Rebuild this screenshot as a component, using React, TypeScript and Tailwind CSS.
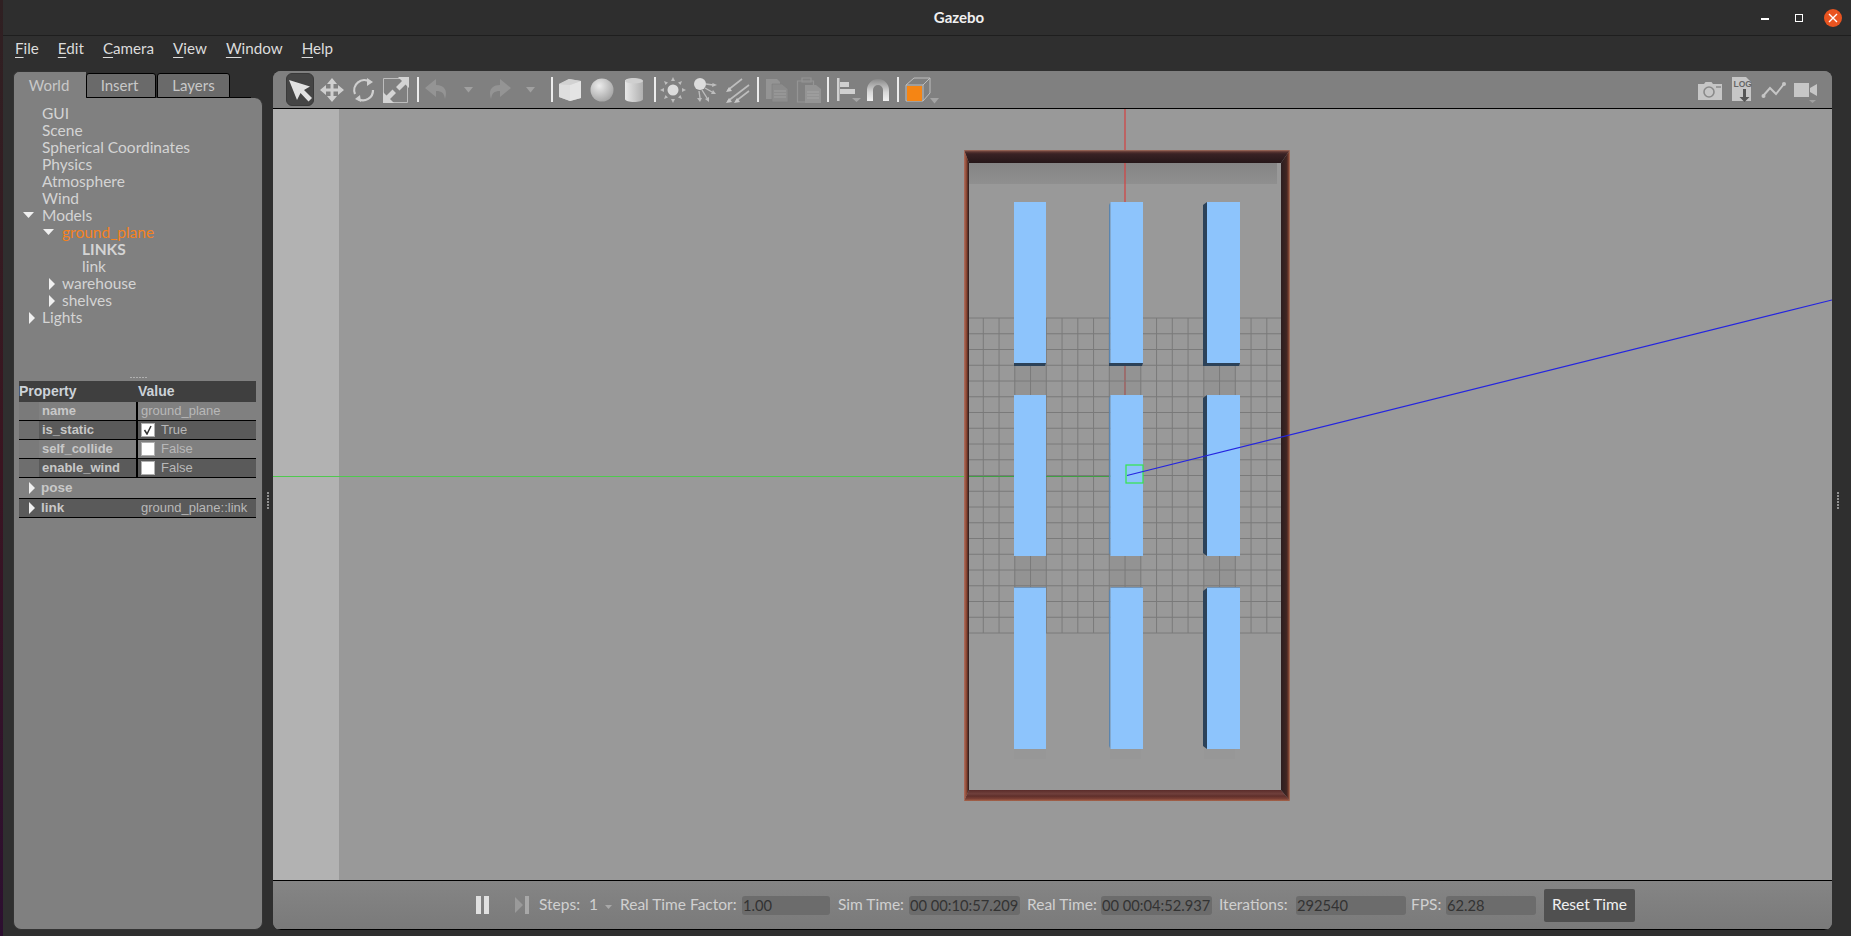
import React from "react";

const ui = "font-['Lato','Noto_Sans',sans-serif]";
const arial = "font-['Liberation_Sans',Arial,sans-serif]";

function Ico({ children, w = 32 }: { children: React.ReactNode; w?: number }) {
  return (
    <div className="flex h-[33px] shrink-0 items-center justify-center" style={{ width: w }}>
      <svg width="28" height="28" viewBox="0 0 28 28">{children}</svg>
    </div>
  );
}
function Sep({ l = 4, r = 2 }: { l?: number; r?: number }) {
  return <div className="h-[25px] w-[2px] shrink-0 bg-[#ececec]" style={{ marginLeft: l, marginRight: r }} />;
}
function Drop({ w = 30 }: { w?: number }) {
  return (
    <div className="flex h-[33px] shrink-0 items-center justify-center" style={{ width: w }}>
      <svg width="9" height="6" viewBox="0 0 9 6"><path d="M0 0h9L4.500 5.500z" fill="#a0a0a0" /></svg>
    </div>
  );
}

function Toolbar() {
  const on = "#cfcfcf";
  const off = "#949494";
  return (
    <div className="flex h-[38px] shrink-0 items-center border-b border-black bg-[#808080] pl-[11px] pr-[10px]">
      <div className="mx-[2px] flex h-[33px] w-[28px] shrink-0 items-center justify-center rounded-[6px] border border-[#3a3a3a] bg-[#454545]">
        <svg width="26" height="26" viewBox="0 0 26 26"><path d="M2 3 L23 9.500 L17 13 L25 21 L21.500 24.500 L13.500 16 L10 23 Z" fill="#e2e2e2" /></svg>
      </div>
      <Ico><path d="M14 2l5 6h-3.500v4.500H20V9l6 5-6 5v-3.500h-4.500V20H19l-5 6-5-6h3.500v-4.500H8V19l-6-5 6-5v3.500h4.500V8H9z" fill={on} /></Ico>
      <Ico>
        <path d="M5 18A10 10 0 0 1 20 6" fill="none" stroke={on} strokeWidth="2.200" />
        <path d="M23 14A10 10 0 0 1 8 23" fill="none" stroke={on} strokeWidth="2.200" />
        <path d="M17 2l6 4-6 4zM11 26l-6-3 5-4z" fill={on} />
      </Ico>
      <Ico>
        <path d="M1.500 2.500h24v24h-24z" fill="none" stroke="#bdbdbd" strokeWidth="1" />
        <path d="M16 1h11v11l-3.500-3.500-6 6-3.500-3.500 6-6zM12 27H1V16l3.500 3.500 6-6 3.500 3.500-6 6z" fill="#d4d4d4" />
      </Ico>
      <Sep l={5} r={2} />
      <Ico><path d="M13 3L2 12l11 9v-6c6 0 8 2 9 8 3-9-1-14-9-14z" fill={off} /></Ico>
      <Drop />
      <Ico><path d="M15 3l11 9-11 9v-6c-6 0-8 2-9 8-3-9 1-14 9-14z" fill={off} /></Ico>
      <Drop />
      <Sep l={6} r={1} />
      <Ico>
        <path d="M3 8l10-5 12 2v17l-11 3-11-4z" fill="#c8c8c8" />
        <path d="M3 8l10-5 12 2-11 4z" fill="#d2d2d2" />
        <path d="M3 8l11 1v16l-11-4z" fill="#dedede" />
        <path d="M14 9l11-4v17l-11 3z" fill="#e4e4e4" />
      </Ico>
      <Ico>
        <defs>
          <radialGradient id="sph" cx="0.38" cy="0.32" r="0.8"><stop offset="0" stopColor="#ececec" /><stop offset="1" stopColor="#9c9c9c" /></radialGradient>
          <linearGradient id="cyl" x1="0" x2="1"><stop offset="0" stopColor="#e8e8e8" /><stop offset="1" stopColor="#b0b0b0" /></linearGradient>
          <linearGradient id="mag" x1="0" y1="0" x2="0" y2="1"><stop offset="0" stopColor="#8a8a8a" /><stop offset="0.6" stopColor="#d8d8d8" /><stop offset="1" stopColor="#f2f2f2" /></linearGradient>
        </defs>
        <circle cx="14" cy="14" r="11.500" fill="url(#sph)" />
      </Ico>
      <Ico>
        <path d="M5 5c0-4 18-4 18 0v18c0 4-18 4-18 0z" fill="url(#cyl)" />
        <ellipse cx="14" cy="5" rx="9" ry="2.600" fill="#d0d0d0" />
      </Ico>
      <Sep l={4} r={1} />
      <Ico>
        <circle cx="14" cy="14" r="5.500" fill="#dcdcdc" />
        <path d="M14 1l2 4h-4zM14 27l-2-4h4zM1 14l4-2v4zM27 14l-4 2v-4zM5 5l4 1.500L6.500 9zM23 23l-4-1.500 2.500-2.500zM23 5l-1.500 4L19 6.500zM5 23l1.500-4L9 21.500z" fill="#bdbdbd" />
      </Ico>
      <Ico>
        <circle cx="9" cy="8" r="6" fill="#dcdcdc" />
        <path d="M15 8l7 1M14 12l7 4M11 14l5 8M8 15l1 7" stroke="#bdbdbd" strokeWidth="1.400" />
        <path d="M26 9l-5 2 .5-4zM25 18l-5 0 2-4zM18 26l-4-3 4-2zM9 26l-3-4h5z" fill="#bdbdbd" />
      </Ico>
      <Ico>
        <path d="M5 14L19 3M5 25L26 9M13 25l13-10" stroke="#bdbdbd" strokeWidth="1.600" fill="none" />
        <path d="M3 16l6-1-3-4zM3 27l6-1-3-4zM11 27l6-1-3-4z" fill="#c8c8c8" />
      </Ico>
      <Sep l={4} r={2} />
      <Ico>
        <path d="M3 3h11l3 3v17H3z" fill={off} />
        <path d="M9 8h10l6 5v13H9z" fill="#8c8c8c" stroke="#7c7c7c" strokeWidth="0.600" />
        <path d="M11 15h12M11 18h12M11 21h12" stroke="#a0a0a0" strokeWidth="1" />
      </Ico>
      <Ico>
        <path d="M2.500 5h16v21h-16z" fill="none" stroke={off} strokeWidth="1.200" />
        <path d="M7 2h9v4H7z" fill="none" stroke={off} strokeWidth="1.200" />
        <path d="M10 9h11l5 4v14H10z" fill={off} />
        <path d="M12 16h12M12 19h12M12 22h12" stroke="#a6a6a6" strokeWidth="1" />
      </Ico>
      <Sep l={2} r={2} />
      <Ico w={31}>
        <path d="M4 2h2.500v23H4z" fill="#d0d0d0" />
        <path d="M7 6h9v5H7zM7 13h15v5H7z" fill="#d0d0d0" />
        <path d="M19 22h9l-4.500 4z" fill="#a4a4a4" />
      </Ico>
      <Ico>
        <path d="M3 25V14a11 11 0 0 1 22 0v11h-6V14a5 5 0 0 0-10 0v11z" fill="url(#mag)" />
      </Ico>
      <Sep l={3} r={3} />
      <Ico>
        <path d="M2 9L10 2h16v15l-7 8" fill="none" stroke="#bdbdbd" strokeWidth="1" />
        <path d="M2 9h17M19 9l7-7M2 9v16h17V9" fill="none" stroke="#bdbdbd" strokeWidth="1" />
        <path d="M3 10h15v15H3z" fill="#f58514" />
      </Ico>
      <div className="-ml-[4px]"><svg width="9" height="6" viewBox="0 0 9 6" className="mt-[22px]"><path d="M0 0h9L4.500 5.500z" fill="#a4a4a4" /></svg></div>
      <div className="flex-1" />
      <Ico>
        <path d="M2 8h6l1.500-2h6l1.500 2h9v16H2z" fill="#c6c6c6" />
        <circle cx="13" cy="16" r="5" fill="none" stroke="#8a8a8a" strokeWidth="1.600" />
        <path d="M20 10h5v2h-5z" fill="#9a9a9a" />
      </Ico>
      <Ico>
        <path d="M4 1h14l5 5v19H4z" fill="#c6c6c6" />
        <text x="5.500" y="11" fontSize="8.500" fontWeight="700" fill="#666" className={arial}>LOG</text>
        <path d="M15 13h3v8h3.500l-5 5-5-5H15z" fill="#555" />
      </Ico>
      <Ico>
        <path d="M3 20L10 12l6 6 8-10" fill="none" stroke="#c6c6c6" strokeWidth="2" />
        <circle cx="3.500" cy="20" r="2" fill="#c6c6c6" /><circle cx="24" cy="8" r="2" fill="#c6c6c6" />
      </Ico>
      <Ico>
        <path d="M2 7h15v14H2zM18 12l7-4v12l-7-4z" fill="#c6c6c6" />
        <path d="M17 24h7l-3.500 3z" fill="#a0a0a0" />
      </Ico>
    </div>
  );
}

function Scene() {
  const xs = Array.from({ length: 19 }, (_, k) => 983.3 + k * 15.75);
  const ys = Array.from({ length: 21 }, (_, k) => 318 + k * 15.75);
  const cols: [number, number, number, string][] = [
    [1014, 1046, 0, "#2c4259"],
    [1110.500, 1143, 1.500, "#5a84ad"],
    [1207, 1240, 4, "#2c4259"],
  ];
  const rows: [number, number][] = [[202, 363], [395, 556], [588, 749]];
  return (
    <svg className="block h-full w-full" viewBox="273 109 1559 771" preserveAspectRatio="none">
      <defs>
        <linearGradient id="band" x1="0" y1="0" x2="0" y2="1"><stop offset="0" stopColor="#858585" /><stop offset="1" stopColor="#8f8f8f" /></linearGradient>
        <linearGradient id="wb" x1="0" y1="0" x2="0" y2="1"><stop offset="0" stopColor="#5a2c2a" /><stop offset="0.35" stopColor="#70403c" /><stop offset="0.55" stopColor="#5e2f2b" /><stop offset="0.8" stopColor="#7a3f35" /><stop offset="1" stopColor="#a8654a" /></linearGradient>
        <linearGradient id="wt" x1="0" y1="0" x2="0" y2="1"><stop offset="0" stopColor="#a5705f" /><stop offset="0.14" stopColor="#5c3632" /><stop offset="0.3" stopColor="#3a2224" /><stop offset="1" stopColor="#251719" /></linearGradient>
        <linearGradient id="wr" x1="0" y1="0" x2="1" y2="0"><stop offset="0" stopColor="#2c1d1f" /><stop offset="0.6" stopColor="#3f2522" /><stop offset="0.8" stopColor="#6a3529" /><stop offset="1" stopColor="#b27a60" /></linearGradient>
        <linearGradient id="wl" x1="0" y1="0" x2="1" y2="0"><stop offset="0" stopColor="#b07060" /><stop offset="0.5" stopColor="#8a4632" /><stop offset="0.8" stopColor="#4a2a26" /><stop offset="1" stopColor="#261819" /></linearGradient>
      </defs>
      <rect x="273" y="109" width="1559" height="771" fill="#999999" />
      <rect x="273" y="109" width="66" height="771" fill="#b2b2b2" />
      <rect x="969" y="163" width="308" height="21" fill="url(#band)" />
      {[[1014, 1046], [1110, 1141], [1204, 1235]].map(([a, b]) => (
        <React.Fragment key={a}>
          <rect x={a} y={366} width={b - a} height={30} fill="#939393" />
          <rect x={a} y={556} width={b - a} height={31} fill="#939393" />
          <rect x={a} y={749} width={b - a} height={10} fill="#979797" />
        </React.Fragment>
      ))}
      <line x1="1125" y1="109" x2="1125" y2="400" stroke="#d04848" strokeWidth="1.300" />
      {ys.map((y) => <line key={y} x1="969" x2="1281" y1={y} y2={y} stroke="#7a7a7a" strokeWidth="1" />)}
      {xs.map((x) => <line key={x} x1={x} x2={x} y1="318" y2="633" stroke="#7a7a7a" strokeWidth="1" />)}
      <line x1="273" y1="476.500" x2="964" y2="476.500" stroke="#4fc94f" strokeWidth="1" />
      <line x1="969" y1="476.500" x2="1112" y2="476.500" stroke="#3fa044" strokeWidth="1" />
      <path d="M964 150H1290L1281 163H969Z" fill="url(#wt)" />
      <path d="M964 801H1290L1281 790H969Z" fill="url(#wb)" />
      <path d="M964 150L969 163V790L964 801Z" fill="url(#wl)" />
      <path d="M1290 150L1281 163V790L1290 801Z" fill="url(#wr)" />
      {rows.map(([t, b], ri) =>
        cols.map(([l, r, side, c]) => (
          <React.Fragment key={`${ri}-${l}`}>
            {side > 0 && <path d={`M${l} ${t}L${l - side} ${t + 3}V${b + (ri === 0 ? 3 : -3)}L${l} ${b}Z`} fill={c} />}
            {ri === 0 && <path d={`M${l - side} ${b}H${r}L${r - 1} ${b + 3}H${l - side}Z`} fill="#2c4259" />}
            {ri === 2 && <rect x={l} y={t - 1} width={r - l} height="1" fill="#6f93b8" />}
            <rect x={l} y={t} width={r - l} height={b - t} fill="#8dc4fc" />
          </React.Fragment>
        )),
      )}
      <rect x="1126" y="465" width="17" height="18" fill="none" stroke="#33e64a" strokeWidth="1.200" />
      <line x1="1127" y1="475.500" x2="1832" y2="300" stroke="#2424e0" strokeWidth="1.200" />
    </svg>
  );
}

function Grip() {
  return <div className="h-[18px] w-[2px] bg-[repeating-linear-gradient(to_bottom,#8f8f8f_0,#8f8f8f_2px,transparent_2px,transparent_3px)]" />;
}

function Tri({ open }: { open: boolean }) {
  return open ? (
    <svg width="12" height="7" viewBox="0 0 12 7"><path d="M0 0h11L5.500 6z" fill="#f0f0f0" /></svg>
  ) : (
    <svg width="6" height="12" viewBox="0 0 6 12" className="ml-[6px]"><path d="M0 0l6 6-6 6z" fill="#f0f0f0" /></svg>
  );
}

const tree: { t: string; d: number; a?: "o" | "c"; c?: string }[] = [
  { t: "GUI", d: 0 }, { t: "Scene", d: 0 }, { t: "Spherical Coordinates", d: 0 }, { t: "Physics", d: 0 },
  { t: "Atmosphere", d: 0 }, { t: "Wind", d: 0 }, { t: "Models", d: 0, a: "o" },
  { t: "ground_plane", d: 1, a: "o", c: "text-[#f5821f]" },
  { t: "LINKS", d: 2, c: "font-bold" }, { t: "link", d: 2 },
  { t: "warehouse", d: 1, a: "c" }, { t: "shelves", d: 1, a: "c" }, { t: "Lights", d: 0, a: "c" },
];

function PropRow({ name, dark, children, h = "h-[19px]", arrow, full }: { name: string; dark?: boolean; children?: React.ReactNode; h?: string; arrow?: boolean; full?: boolean }) {
  return (
    <div className={`flex ${h} border-b border-black ${dark ? "bg-[#5a5a5a]" : "bg-[#808080]"}`}>
      <div className={`flex w-[119px] shrink-0 items-center ${full ? "" : "border-r-2 border-black"}`}>
        <div className={`flex h-full w-[20px] shrink-0 items-center ${arrow ? "" : dark ? "bg-[#6e6e6e]" : "bg-[#7a7a7a]"}`}>
          {arrow && <span className="ml-[4px]"><Tri open={false} /></span>}
        </div>
        <span className={`font-bold text-[#c8c8c8] ${arial} ${arrow ? "pl-[2px] text-[13.500px]" : "pl-[3px] text-[13px]"}`}>{name}</span>
      </div>
      <div className={`flex flex-1 items-center text-[13px] text-[#b8b8b8] ${arial} pl-[3px]`}>{children}</div>
    </div>
  );
}

function Check({ on }: { on?: boolean }) {
  return (
    <div className="mr-[6px] flex h-[14px] w-[14px] shrink-0 items-center justify-center border border-[#b0b0b0] bg-white">
      {on && <svg width="10" height="10" viewBox="0 0 10 10"><path d="M1.500 5l2.500 4L8 1" fill="none" stroke="#333" strokeWidth="1.500" /></svg>}
    </div>
  );
}

function Field({ w, children, ml = 6 }: { w: number; children: React.ReactNode; ml?: number }) {
  return (
    <div className="flex h-[19px] shrink-0 items-center overflow-hidden whitespace-nowrap rounded-[3px] bg-[#6c6c6c] pl-[1px] text-[14.700px] text-[#333]" style={{ width: w, marginLeft: ml }}>
      {children}
    </div>
  );
}

function Label({ children, w }: { children: React.ReactNode; w: number }) {
  return <div className="shrink-0 whitespace-nowrap text-[#d0d0d0]" style={{ width: w }}>{children}</div>;
}

export default function App() {
  const menu = ["File", "Edit", "Camera", "View", "Window", "Help"];
  return (
    <div className={`flex h-[936px] w-[1851px] overflow-hidden bg-[#2f2f2f] ${ui}`}>
      <div className="w-[3px] shrink-0 bg-gradient-to-b from-[#2f2022] via-[#3a1420] to-[#2c0f30]" />
      <div className="flex min-w-0 flex-1 flex-col">
        <div className="relative flex h-[36px] shrink-0 items-center justify-center border-b border-[#1e1e1e] bg-[#2e2e2e]">
          <span className="ml-[64px] text-[15px] font-bold text-[#f0f0f0]">Gazebo</span>
          <div className="absolute right-[9px] top-0 flex h-[35px] items-center">
            <div className="mr-[26px] mt-[3px] h-[1.500px] w-[8px] bg-white" />
            <div className="mr-[21px] h-[8px] w-[8px] border border-white" />
            <div className="flex h-[18px] w-[18px] items-center justify-center rounded-full bg-[#e95420]">
              <svg width="10" height="10" viewBox="0 0 10 10"><path d="M1 1l8 8M9 1l-8 8" stroke="#fff" strokeWidth="1.400" /></svg>
            </div>
          </div>
        </div>
        <div className="flex h-[35px] shrink-0 items-center gap-[19px] pb-[10px] pl-[12px] text-[15.200px] text-[#dcdcdc]">
          {menu.map((m) => (
            <span key={m}><span className="underline underline-offset-[3px]">{m[0]}</span>{m.slice(1)}</span>
          ))}
        </div>
        <div className="flex min-h-0 flex-1 pb-[6px]">
          <div className="ml-[10px] flex w-[250px] shrink-0 flex-col">
            <div className="flex h-[27px] shrink-0 items-end text-[15px] text-[#c8c8c8]">
              <div className="flex h-[27px] w-[73px] items-center justify-center rounded-tl-[6px] border-l border-t border-[#333] bg-[#808080] pr-[2px]">World</div>
              <div className="flex h-[25px] w-[70px] items-center justify-center rounded-t-[3px] border border-black bg-[#6a6a6a] pr-[3px]">Insert</div>
              <div className="ml-[1px] flex h-[25px] w-[73px] items-center justify-center rounded-t-[3px] border border-black bg-[#6a6a6a]">Layers</div>
              <div className="h-[1px] w-[21px] bg-black" />
            </div>
            <div className="flex min-h-0 flex-1 flex-col rounded-b-[8px] rounded-tr-[8px] border-x border-b border-[#333] bg-[#808080]">
              <div className="flex flex-col pt-[7px] text-[15.500px] text-[#d4d4d4]">
                {tree.map((r) => (
                  <div key={r.t} className="flex h-[17px] items-center leading-none" style={{ paddingLeft: 9 + r.d * 20 }}>
                    <div className="flex w-[19px] shrink-0 items-center">
                      {r.a && <Tri open={r.a === "o"} />}
                    </div>
                    <span className={r.c}>{r.t}</span>
                  </div>
                ))}
              </div>
              <div className="mt-[47px] flex h-[8px] items-center justify-center">
                <div className="h-[1px] w-[17px] bg-[repeating-linear-gradient(to_right,#b0b0b0_0,#b0b0b0_2px,transparent_2px,transparent_3px)]" />
              </div>
              <div className="ml-[5px] mr-[6px] flex flex-col">
                <div className={`flex h-[21px] items-center bg-[#3f3f3f] text-[14px] font-bold text-[#ccd2d8] ${arial}`}>
                  <div className="w-[119px]">Property</div>
                  <div>Value</div>
                </div>
                <PropRow name="name">ground_plane</PropRow>
                <PropRow name="is_static" dark><span className="flex items-center"><Check on />True</span></PropRow>
                <PropRow name="self_collide"><span className="flex items-center"><Check />False</span></PropRow>
                <PropRow name="enable_wind" dark><span className="flex items-center"><Check />False</span></PropRow>
                <PropRow name="pose" h="h-[21px]" arrow full />
                <PropRow name="link" dark h="h-[19px]" arrow full>ground_plane::link</PropRow>
              </div>
            </div>
          </div>
          <div className="flex w-[10px] shrink-0 items-center justify-center"><Grip /></div>
          <div className="flex w-[1559px] shrink-0 flex-col overflow-hidden rounded-[8px] bg-[#808080]">
            <Toolbar />
            <div className="min-h-0 flex-1"><Scene /></div>
            <div className="flex h-[50px] shrink-0 items-center border-y border-black bg-gradient-to-b from-[#858585] to-[#7a7a7a] pl-[203px] text-[15.500px]">
              <svg width="13" height="18" viewBox="0 0 13 18"><path d="M0 0h5v18H0zM8 0h5v18H8z" fill="#e0e0e0" /></svg>
              <svg width="14" height="18" viewBox="0 0 14 18" className="ml-[26px]"><path d="M0 1l8 8-8 8z" fill="#9a9a9a" /><path d="M10 0h4v18h-4z" fill="#a8a8a8" /></svg>
              <div className="ml-[10px]"><Label w={50}>Steps:</Label></div>
              <span className="text-[#d0d0d0]">1</span>
              <svg width="7" height="4" viewBox="0 0 7 4" className="ml-[7px] mt-[4px]"><path d="M0 0h7L3.500 4z" fill="#a8a8a8" /></svg>
              <div className="ml-[8px]"><Label w={116}>Real Time Factor:</Label></div>
              <Field w={88}>1.00</Field>
              <div className="ml-[8px]"><Label w={65}>Sim Time:</Label></div>
              <Field w={111}>00 00:10:57.209</Field>
              <div className="ml-[7px]"><Label w={68}>Real Time:</Label></div>
              <Field w={111}>00 00:04:52.937</Field>
              <div className="ml-[7px]"><Label w={71}>Iterations:</Label></div>
              <Field w={110}>292540</Field>
              <div className="ml-[5px]"><Label w={29}>FPS:</Label></div>
              <Field w={90}>62.28</Field>
              <div className="ml-[8px] flex h-[33px] w-[91px] items-center justify-center rounded-[2px] bg-[#505050] text-[#f0f0f0]">Reset Time</div>
            </div>
          </div>
          <div className="flex flex-1 items-center pl-[5px]"><Grip /></div>
        </div>
      </div>
    </div>
  );
}
